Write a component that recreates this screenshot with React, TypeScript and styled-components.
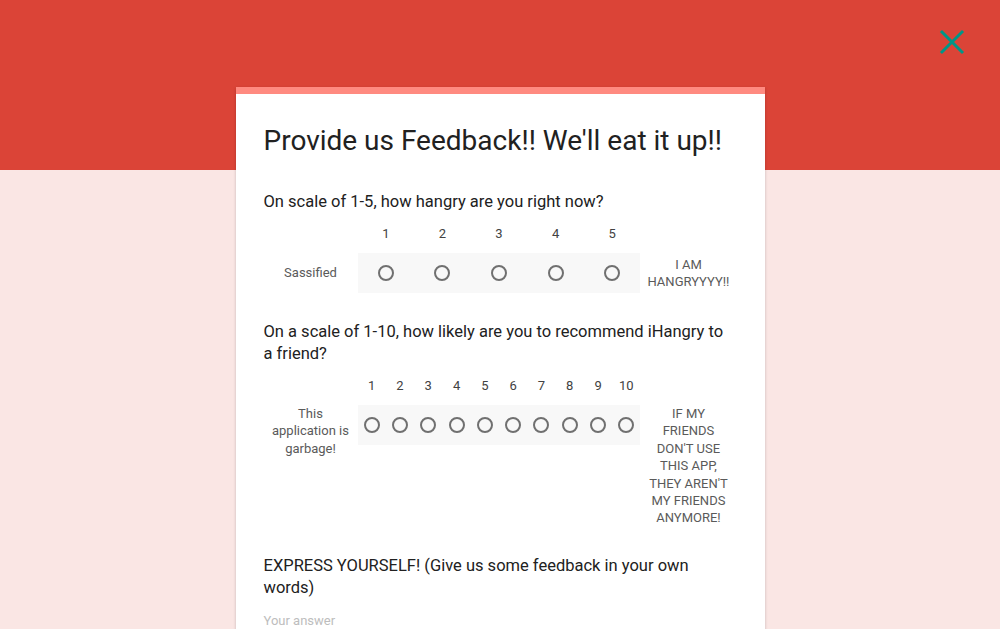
import styled, { createGlobalStyle } from "styled-components";

const GlobalStyle = createGlobalStyle`
  html, body {
    margin: 0;
    padding: 0;
  }
  body {
    font-family: Roboto, "Liberation Sans", Arial, sans-serif;
    background: #fae6e4;
  }
`;

const Page = styled.div`
  position: relative;
  min-height: 100vh;
  background: linear-gradient(to bottom, #db4437 0, #db4437 170px, #fae6e4 170px);
  padding-top: 87px;
  box-sizing: border-box;
`;

const CloseButton = styled.button`
  position: absolute;
  top: 28px;
  right: 34px;
  width: 28px;
  height: 28px;
  padding: 0;
  border: 0;
  background: none;
  cursor: pointer;
  display: flex;
  align-items: center;
  justify-content: center;
`;

const Card = styled.form`
  width: 529px;
  margin: 0 auto;
  box-sizing: border-box;
  background: #fff;
  border-top: 7px solid #ff8a80;
  box-shadow: 0 1px 3px rgba(0, 0, 0, 0.2);
  padding: 28px 32px 24px 28px;
`;

const Title = styled.h1`
  margin: 0 0 32px;
  font-size: 28px;
  line-height: 37px;
  font-weight: 400;
  color: #212121;
`;

const Question = styled.div`
  margin-bottom: 28px;
`;

const QuestionText = styled.div`
  font-size: 16.5px;
  line-height: 22px;
  color: #212121;
`;

const Scale = styled.div<{ $cols: number; $align: string }>`
  display: grid;
  grid-template-columns: 94px repeat(${(p) => p.$cols}, 1fr) 96px;
  align-items: ${(p) => p.$align};
  margin-right: -4px;
`;

const Number = styled.div`
  height: 40px;
  display: flex;
  align-items: center;
  justify-content: center;
  font-size: 13px;
  color: #424242;
`;

const RadioCell = styled.div`
  height: 40px;
  display: flex;
  align-items: center;
  justify-content: center;
  background: #f8f8f8;
`;

const Radio = styled.span`
  width: 16px;
  height: 16px;
  box-sizing: border-box;
  border: 2px solid #707070;
  border-radius: 50%;
`;

const Label = styled.div<{ $pad: number }>`
  padding: 0 ${(p) => p.$pad}px;
  font-size: 13px;
  line-height: 17.4px;
  color: #5a5a5a;
  text-align: center;
`;

const Answer = styled.div`
  margin-top: 12px;
  font-size: 13px;
  line-height: 20px;
  color: #bdbdbd;
`;

type ScaleProps = {
  count: number;
  low: string;
  high: string;
  align: string;
};

const LinearScale = ({ count, low, high, align }: ScaleProps) => {
  const items = Array.from({ length: count }, (_, i) => i + 1);
  return (
    <Scale $cols={count} $align={align}>
      <div />
      {items.map((n) => (
        <Number key={n}>{n}</Number>
      ))}
      <div />
      <Label $pad={7}>{low}</Label>
      {items.map((n) => (
        <RadioCell key={n}>
          <Radio />
        </RadioCell>
      ))}
      <Label $pad={6}>{high}</Label>
    </Scale>
  );
};

const App = () => {
  return (
    <Page>
      <GlobalStyle />
      <CloseButton type="button" aria-label="Close">
        <svg width="26" height="26" viewBox="0 0 26 26">
          <path
            d="M3 3 L23 23 M23 3 L3 23"
            stroke="#009688"
            strokeWidth="3"
            strokeLinecap="square"
          />
        </svg>
      </CloseButton>
      <Card>
        <Title>Provide us Feedback!! We'll eat it up!!</Title>
        <Question>
          <QuestionText>On scale of 1-5, how hangry are you right now?</QuestionText>
          <LinearScale count={5} low="Sassified" high="I AM HANGRYYYY!!" align="center" />
        </Question>
        <Question>
          <QuestionText>
            On a scale of 1-10, how likely are you to recommend iHangry to a friend?
          </QuestionText>
          <LinearScale
            count={10}
            low="This application is garbage!"
            high="IF MY FRIENDS DON'T USE THIS APP, THEY AREN'T MY FRIENDS ANYMORE!"
            align="start"
          />
        </Question>
        <Question>
          <QuestionText>
            EXPRESS YOURSELF! (Give us some feedback in your own words)
          </QuestionText>
          <Answer>Your answer</Answer>
        </Question>
      </Card>
    </Page>
  );
};

export default App;
